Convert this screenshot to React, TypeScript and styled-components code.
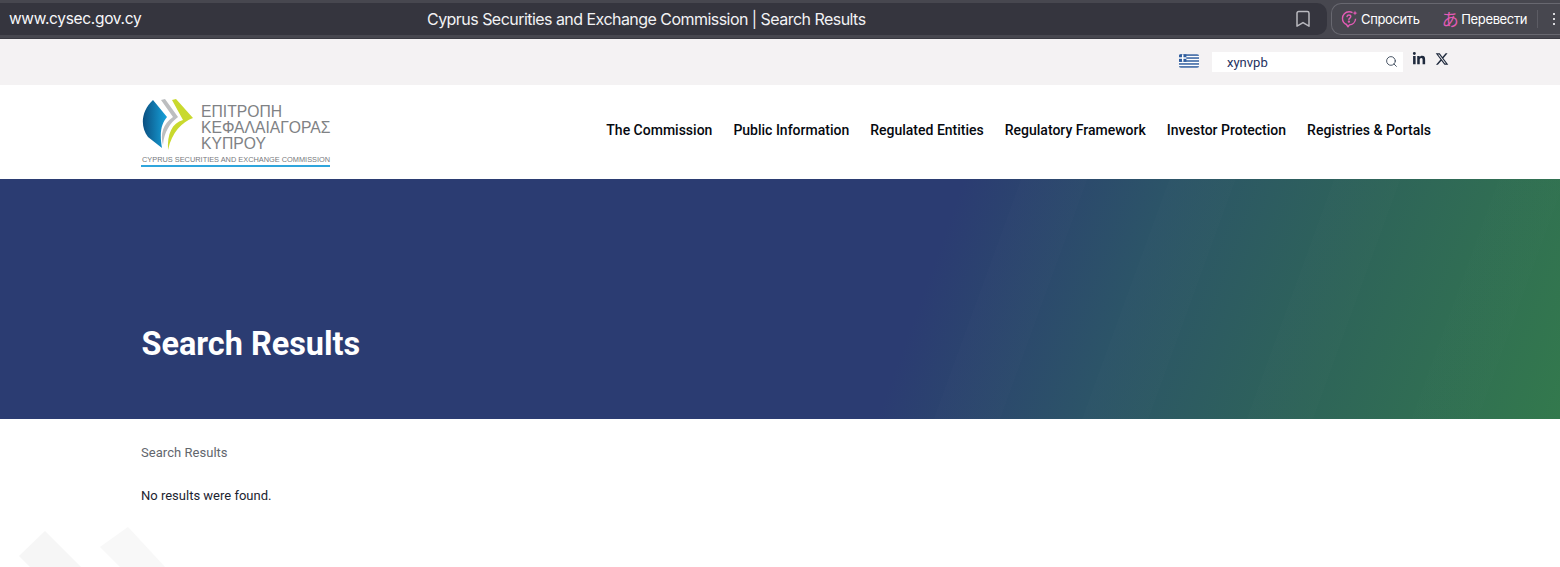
import React from "react";
import styled, { createGlobalStyle } from "styled-components";
import { Search } from "lucide-react";
import { FaLinkedinIn, FaXTwitter } from "react-icons/fa6";

const Global = createGlobalStyle`
  html, body { margin: 0; padding: 0; background: #fff; }
  body { font-family: Roboto, "Liberation Sans", sans-serif; }
  * { box-sizing: border-box; }
`;

const Page = styled.div`
  position: relative;
  width: 1560px;
  height: 567px;
  overflow: hidden;
  background: #fff;
`;

const Chrome = styled.header`
  height: 39px;
  display: flex;
  gap: 4px;
  padding: 3px 0 3px;
  background: #47474f;
  border-bottom: 1px solid #3a3a42;
  font-family: Inter, "Noto Sans", sans-serif;
  color: #fff;
`;

const AddressBar = styled.div`
  position: relative;
  width: 1327px;
  height: 32px;
  display: flex;
  align-items: center;
  padding: 0 16px 0 9px;
  background: #35353e;
  border-radius: 0 10px 10px 0;
`;

const Host = styled.span`
  margin-top: -2px;
  font-size: 15.5px;
  font-weight: 400;
  letter-spacing: -0.32px;
  color: #f8f8fa;
`;

const PageTitle = styled.span`
  position: absolute;
  left: 427px;
  top: 6px;
  font-size: 16px;
  letter-spacing: -0.54px;
  white-space: nowrap;
  color: #f2f2f4;
`;

const Bookmark = styled.svg`
  margin-left: auto;
  width: 16px;
  height: 18px;
`;

const ToolPill = styled.div`
  flex: 1;
  height: 32px;
  display: flex;
  align-items: center;
  padding-left: 9px;
  border: 1px solid #686870;
  border-right: 0;
  border-radius: 10px 0 0 10px;
`;

const ToolButton = styled.span`
  display: flex;
  align-items: center;
  gap: 3px;
  margin-right: 22px;
  font-size: 13px;
  letter-spacing: -0.36px;
  white-space: nowrap;
`;

const Kana = styled.span`
  font-family: "Noto Sans CJK JP", sans-serif;
  font-size: 17px;
  line-height: 18px;
  color: #e35bb5;
`;

const ToolDivider = styled.span`
  width: 1px;
  height: 18px;
  margin-left: -12px;
  background: #5c5c64;
`;

const Dots = styled.span`
  display: flex;
  flex-direction: column;
  gap: 3px;
  margin-left: 15px;
  & > i {
    width: 2px;
    height: 2px;
    background: #d8d8dc;
  }
`;

const UtilityBar = styled.div`
  height: 46px;
  display: flex;
  align-items: flex-start;
  padding: 13px 0 0 1179px;
  background: #f4f2f3;
`;

const Flag = styled.svg`
  width: 20px;
  height: 14px;
  margin-top: 2px;
  border-radius: 2px;
`;

const SearchBox = styled.div`
  width: 191px;
  height: 20px;
  margin-left: 13px;
  display: flex;
  align-items: center;
  padding: 0 5px 0 15px;
  background: #fff;
  font-size: 13px;
  color: #1e3160;
  & > svg {
    margin-left: auto;
    margin-top: -2px;
    color: #2f3d50;
  }
`;

const Social = styled.a`
  display: flex;
  margin-left: ${(p: { $gap: number }) => p.$gap}px;
  color: #1f2a3d;
`;

const MainNav = styled.div`
  height: 94px;
  display: flex;
  align-items: flex-start;
  padding: 14px 129px 0 141px;
  background: #fff;
`;

const Logo = styled.div`
  display: flex;
  flex-direction: column;
  width: 190px;
`;

const LogoTop = styled.div`
  display: flex;
  gap: 8px;
  height: 52px;
`;

const LogoMark = styled.svg`
  width: 52px;
  height: 52px;
  flex: none;
`;

const LogoWords = styled.div`
  font-family: "Liberation Sans", Arial, sans-serif;
  font-size: 15.7px;
  line-height: 15.8px;
  color: #808285;
  padding-top: 5px;
  white-space: nowrap;
`;

const LogoCaption = styled.div`
  margin-top: 4px;
  padding-left: 1px;
  width: 189px;
  border-bottom: 2px solid #2fa5dc;
  font-family: "Liberation Sans", Arial, sans-serif;
  font-size: 7.38px;
  line-height: 9.5px;
  color: #77797c;
  white-space: nowrap;
`;

const Menu = styled.nav`
  margin-left: auto;
  margin-top: 21px;
  display: flex;
  gap: 21px;
`;

const MenuLink = styled.a`
  font-size: 14px;
  font-weight: 500;
  line-height: 20px;
  color: #06090f;
  white-space: nowrap;
`;

const Hero = styled.section`
  height: 240px;
  display: flex;
  align-items: flex-end;
  padding: 0 0 55px 141.5px;
  background:
    linear-gradient(110deg,
      transparent 62%, rgba(255,255,255,0.006) 62% 66%,
      transparent 66% 71%, rgba(255,255,255,0.006) 71% 75%,
      transparent 75% 81%, rgba(255,255,255,0.006) 81% 85%,
      transparent 85% 91%, rgba(255,255,255,0.005) 91% 95%,
      transparent 95%),
    linear-gradient(110deg, #2b3c72 58.5%, #2c5468 71%, #2e6459 84%, #33794d 100%);
`;

const HeroTitle = styled.h1`
  margin: 0;
  font-size: 32.4px;
  line-height: 40px;
  font-weight: 700;
  color: #fff;
`;

const Content = styled.main`
  position: relative;
  z-index: 1;
  padding: 26px 0 0 141px;
`;

const Crumb = styled.div`
  font-size: 13px;
  line-height: 16px;
  letter-spacing: 0.04px;
  color: #62666d;
`;

const Message = styled.p`
  margin: 27px 0 0;
  font-size: 13px;
  line-height: 16px;
  color: #1c2430;
`;

const Watermark = styled.svg`
  position: absolute;
  left: 0;
  bottom: 0;
  width: 200px;
  height: 50px;
`;

const LOGO_GRAD = "logoBlue";

export default function App() {
  return (
    <Page>
      <Global />
      <Chrome>
        <AddressBar>
          <Host>www.cysec.gov.cy</Host>
          <PageTitle>Cyprus Securities and Exchange Commission | Search Results</PageTitle>
          <Bookmark viewBox="0 0 16 18" fill="none" stroke="#b9b9bf" strokeWidth="1.5">
            <path d="M2 3.2c0-1 .7-1.7 1.7-1.7h8.6c1 0 1.7.7 1.7 1.7v13l-6-3.6-6 3.6z" strokeLinejoin="round" />
          </Bookmark>
        </AddressBar>
        <ToolPill>
          <ToolButton>
            <svg width="17" height="18" viewBox="0 0 17 18" fill="none" stroke="#e35bb5" strokeWidth="1.4">
              <path d="M11.5 2.6A7 7 0 0 0 8 1.8a6.6 6.6 0 0 0-6.5 6.7c0 2.8 1.8 5 4 6l1.5 2.3 1.4-1.9a6.7 6.7 0 0 0 6.2-6.2" strokeLinejoin="round" />
              <path d="M6 6.5c.2-1 1-1.5 1.9-1.5 1 0 1.9.7 1.9 1.6 0 1.5-1.9 1.5-1.9 3" strokeLinecap="round" />
              <circle cx="7.9" cy="11.6" r=".5" fill="#e35bb5" />
              <path d="M14 .6l.7 1.8 1.8.7-1.8.7-.7 1.8-.7-1.8-1.8-.7 1.8-.7z" fill="#e35bb5" stroke="none" />
            </svg>
            Спросить
          </ToolButton>
          <ToolButton>
            <Kana>あ</Kana>
            Перевести
          </ToolButton>
          <ToolDivider />
          <Dots><i /><i /><i /></Dots>
        </ToolPill>
      </Chrome>

      <UtilityBar>
        <Flag viewBox="0 0 27 18">
          <rect width="27" height="18" fill="#2f5d9e" />
          {[2, 6, 10, 14].map((y) => <rect key={y} y={y} width="27" height="2" fill="#fff" />)}
          <rect width="10" height="10" fill="#2f5d9e" />
          <rect x="4" width="2" height="10" fill="#fff" />
          <rect y="4" width="10" height="2" fill="#fff" />
        </Flag>
        <SearchBox>
          xynvpb
          <Search size={13} strokeWidth={1.6} />
        </SearchBox>
        <Social $gap={9}><FaLinkedinIn size={14} /></Social>
        <Social $gap={9}><FaXTwitter size={14} /></Social>
      </UtilityBar>

      <MainNav>
        <Logo>
          <LogoTop>
            <LogoMark viewBox="0 0 52 52">
              <defs>
                <linearGradient id={LOGO_GRAD} x1="0" y1="0" x2="1" y2="0">
                  <stop offset="0" stopColor="#0b4f80" />
                  <stop offset="1" stopColor="#16a3dc" />
                </linearGradient>
              </defs>
              <path d="M12 1 L26 18 C21 24 18 32 21 49 L7 38 C-1 28 0 12 12 1z" fill={`url(#${LOGO_GRAD})`} />
              <path d="M20 1 L24 0 L37 18 C29 24 23 33 22 46 C19 35 22 25 32 18z" fill="#bcbec0" />
              <path d="M31 1 L35 0 L52 19 C41 23 31 33 27 51 C26 35 31 24 42 21z" fill="#c9d92e" />
            </LogoMark>
            <LogoWords>
              ΕΠΙΤΡΟΠΗ<br />
              ΚΕΦΑΛΑΙΑΓΟΡΑΣ<br />
              ΚΥΠΡΟΥ
            </LogoWords>
          </LogoTop>
          <LogoCaption>CYPRUS SECURITIES AND EXCHANGE COMMISSION</LogoCaption>
        </Logo>
        <Menu>
          <MenuLink>The Commission</MenuLink>
          <MenuLink>Public Information</MenuLink>
          <MenuLink>Regulated Entities</MenuLink>
          <MenuLink>Regulatory Framework</MenuLink>
          <MenuLink>Investor Protection</MenuLink>
          <MenuLink>Registries &amp; Portals</MenuLink>
        </Menu>
      </MainNav>

      <Hero>
        <HeroTitle>Search Results</HeroTitle>
      </Hero>

      <Watermark viewBox="0 0 200 50">
        <path d="M19 39 L45 14 L81 50 L30 50z" fill="#f6f6f6" />
        <path d="M100 30 L128 10 L165 50 L120 50z" fill="#f8f8f8" />
      </Watermark>

      <Content>
        <Crumb>Search Results</Crumb>
        <Message>No results were found.</Message>
      </Content>
    </Page>
  );
}
